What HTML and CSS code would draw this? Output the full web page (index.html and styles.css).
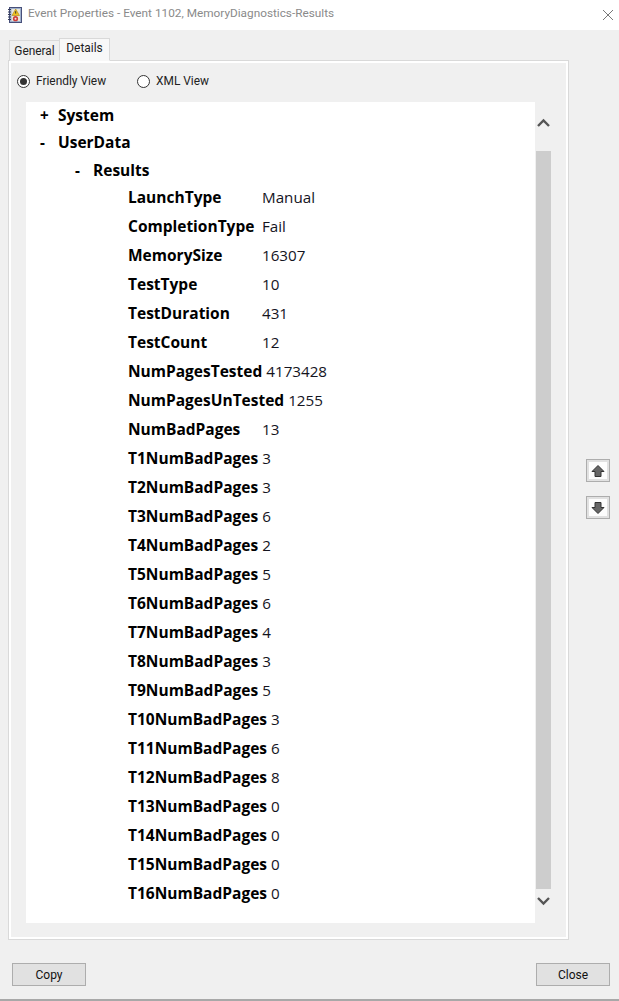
FILE: index.html
```html
<!DOCTYPE html>
<html lang="en">
<head>
<meta charset="utf-8">
<title>Event Properties</title>
<link rel="stylesheet" href="styles.css">
</head>
<body>
<div class="window">
  <header class="titlebar">
    <svg class="app-icon" width="16" height="16" viewBox="0 0 16 16">
      <rect x="2.5" y="0.5" width="12" height="15" fill="#9fb0cc" stroke="#47507a"/>
      <path d="M1 2.5 H4 M1 5 H4 M1 7.5 H4 M1 10 H4 M1 12.5 H4" stroke="#333a5c" stroke-width="1"/>
      <rect x="4.5" y="2" width="8.5" height="12" fill="#e9e6da"/>
      <path d="M8.7 2 L12.5 8.5 H5 Z" fill="#f2c31e" stroke="#a8831a" stroke-width=".6"/>
      <rect x="8.2" y="4.2" width="1" height="2.4" fill="#333"/>
      <circle cx="8.5" cy="11.7" r="2.6" fill="#cf3f3c"/>
      <circle cx="8.5" cy="11.7" r="1" fill="#f2dede"/>
    </svg>
    <span class="title">Event Properties - Event 1102, MemoryDiagnostics-Results</span>
    <svg class="close-x" width="12" height="12" viewBox="0 0 12 12"><path d="M1 1 L11 11 M11 1 L1 11" stroke="#777" stroke-width="1" fill="none"/></svg>
  </header>
  <div class="tabs">
    <div class="tab">General</div>
    <div class="tab tab-active">Details</div>
  </div>
  <div class="main-row">
    <section class="panel">
      <div class="radios">
        <label class="radio"><span class="dot dot-on"></span>Friendly View</label>
        <label class="radio"><span class="dot"></span>XML View</label>
      </div>
      <div class="viewer">
        <div class="list">
          <div class="node l0"><span class="tog">+</span><b>System</b></div>
          <div class="node l0 second"><span class="tog">-</span><b>UserData</b></div>
          <div class="node l1"><span class="tog">-</span><b>Results</b></div>
          <div class="row"><b>LaunchType</b><span>Manual</span></div>
          <div class="row"><b>CompletionType</b><span>Fail</span></div>
          <div class="row"><b>MemorySize</b><span>16307</span></div>
          <div class="row"><b>TestType</b><span>10</span></div>
          <div class="row"><b>TestDuration</b><span>431</span></div>
          <div class="row"><b>TestCount</b><span>12</span></div>
          <div class="row"><b>NumPagesTested</b><span>4173428</span></div>
          <div class="row"><b>NumPagesUnTested</b><span>1255</span></div>
          <div class="row"><b>NumBadPages</b><span>13</span></div>
          <div class="row"><b>T1NumBadPages</b><span>3</span></div>
          <div class="row"><b>T2NumBadPages</b><span>3</span></div>
          <div class="row"><b>T3NumBadPages</b><span>6</span></div>
          <div class="row"><b>T4NumBadPages</b><span>2</span></div>
          <div class="row"><b>T5NumBadPages</b><span>5</span></div>
          <div class="row"><b>T6NumBadPages</b><span>6</span></div>
          <div class="row"><b>T7NumBadPages</b><span>4</span></div>
          <div class="row"><b>T8NumBadPages</b><span>3</span></div>
          <div class="row"><b>T9NumBadPages</b><span>5</span></div>
          <div class="row"><b>T10NumBadPages</b><span>3</span></div>
          <div class="row"><b>T11NumBadPages</b><span>6</span></div>
          <div class="row"><b>T12NumBadPages</b><span>8</span></div>
          <div class="row"><b>T13NumBadPages</b><span>0</span></div>
          <div class="row"><b>T14NumBadPages</b><span>0</span></div>
          <div class="row"><b>T15NumBadPages</b><span>0</span></div>
          <div class="row"><b>T16NumBadPages</b><span>0</span></div>
        </div>
        <div class="scrollbar">
          <svg class="chev-up" width="15" height="11" viewBox="0 0 15 11"><path d="M2 9 L7.5 3.5 L13 9" fill="none" stroke="#555" stroke-width="2.4"/></svg>
          <div class="thumb"></div>
          <svg class="chev-down" width="15" height="11" viewBox="0 0 15 11"><path d="M2 2 L7.5 7.5 L13 2" fill="none" stroke="#555" stroke-width="2.4"/></svg>
        </div>
      </div>
    </section>
    <div class="arrows">
      <button class="arrow"><svg width="14" height="14" viewBox="0 0 14 14"><path d="M7 1.5 L13 7.5 H10 V12.5 H4 V7.5 H1 Z" fill="#666" stroke="#333" stroke-width="1"/></svg></button>
      <button class="arrow"><svg width="14" height="14" viewBox="0 0 14 14"><path d="M7 12.5 L13 6.5 H10 V1.5 H4 V6.5 H1 Z" fill="#666" stroke="#333" stroke-width="1"/></svg></button>
    </div>
  </div>
  <footer class="footer">
    <button class="btn">Copy</button>
    <button class="btn">Close</button>
  </footer>
</div>
</body>
</html>
```
FILE: styles.css
```css
html, body { margin: 0; padding: 0; }
body { width: 619px; height: 1001px; overflow: hidden; background: #f0f0f0; font-family: "Open Sans", "Noto Sans", sans-serif; color: #000; }
.window { height: 999px; border-bottom: 2px solid #a8a8a8; display: flex; flex-direction: column; }
.titlebar { height: 30px; background: #fff; display: flex; align-items: center; padding: 0 5px 0 7px; }
.app-icon { flex: none; }
.title { margin-left: 5px; font: 11.8px/1 Roboto, sans-serif; color: #8a8a8a; flex: 1; white-space: nowrap; position: relative; top: -1px; }
.tabs { display: flex; height: 31px; padding: 9px 0 0 9px; box-sizing: border-box; align-items: flex-end; position: relative; z-index: 1; margin-bottom: -1px; }
.tab { height: 21px; width: 51px; box-sizing: border-box; border: 1px solid #d9d9d9; border-bottom: none; font: 11.9px/20px Roboto, sans-serif; text-align: center; background: #f0f0f0; color: #222; }
.tab-active { height: 23px; width: 51px; background: #f8f8f8; border-bottom: 1px solid #f8f8f8; line-height: 18px; margin-left: -1px; }
.main-row { display: flex; flex: 1; min-height: 0; padding-left: 8px; }
.panel { width: 561px; height: 880px; box-sizing: border-box; border: 1px solid #d9d9d9; box-shadow: inset 2px 2px 0 #fff, inset -2px -2px 0 #fff; display: flex; flex-direction: column; background: #f0f0f0; padding: 2px 2px 2px 3px; }
.radios { display: flex; height: 39px; padding: 0 0 3px 5px; box-sizing: border-box; align-items: center; gap: 31px; }
.radio { display: flex; align-items: center; font: 11.9px Roboto, sans-serif; color: #222; gap: 6px; }
.dot { width: 11px; height: 11px; border: 1px solid #333; border-radius: 50%; background: #fff; position: relative; display: block; }
.dot-on::after { content: ""; position: absolute; left: 2px; top: 2px; width: 7px; height: 7px; border-radius: 50%; background: #333; }
.viewer { display: flex; margin-left: 14px; height: 821px; }
.list { width: 509px; background: #fff; box-sizing: border-box; font-size: 15.2px; padding-top: 1px; }
.node { height: 27px; line-height: 24px; display: flex; }
.second { height: 28px; }
.node b, .row b { font-weight: 700; font-size: 15.5px; }
.l0 { padding-left: 14px; }
.l1 { padding-left: 49px; height: 26px; }
.tog { width: 18px; font-weight: 700; flex: none; }
.row { height: 29px; line-height: 26px; display: flex; padding-left: 102px; color: #14141e; }
.row b { min-width: 130px; margin-right: 4px; color: #000; white-space: nowrap; }
.scrollbar { width: 15px; margin-left: 1px; display: flex; flex-direction: column; align-items: center; flex: none; }
.chev-up { margin-top: 15px; flex: none; }
.thumb { width: 15px; height: 738px; background: #cdcdcd; margin-top: 23px; flex: none; }
.chev-down { margin-top: 7px; flex: none; }
.arrows { display: flex; flex-direction: column; gap: 14px; padding: 399px 0 0 17px; }
.arrow { width: 24px; height: 23px; padding: 0; background: #fdfdfd; border: 1px solid #adadad; box-shadow: inset 0 0 0 2px #e1e1e1; display: flex; align-items: center; justify-content: center; }
.footer { display: flex; justify-content: space-between; padding: 23px 9px 0 12px; height: 36px; }
.btn { width: 74px; height: 23px; background: #e1e1e1; border: 1px solid #adadad; font: 12px Roboto, sans-serif; color: #111; padding: 0; }
```
